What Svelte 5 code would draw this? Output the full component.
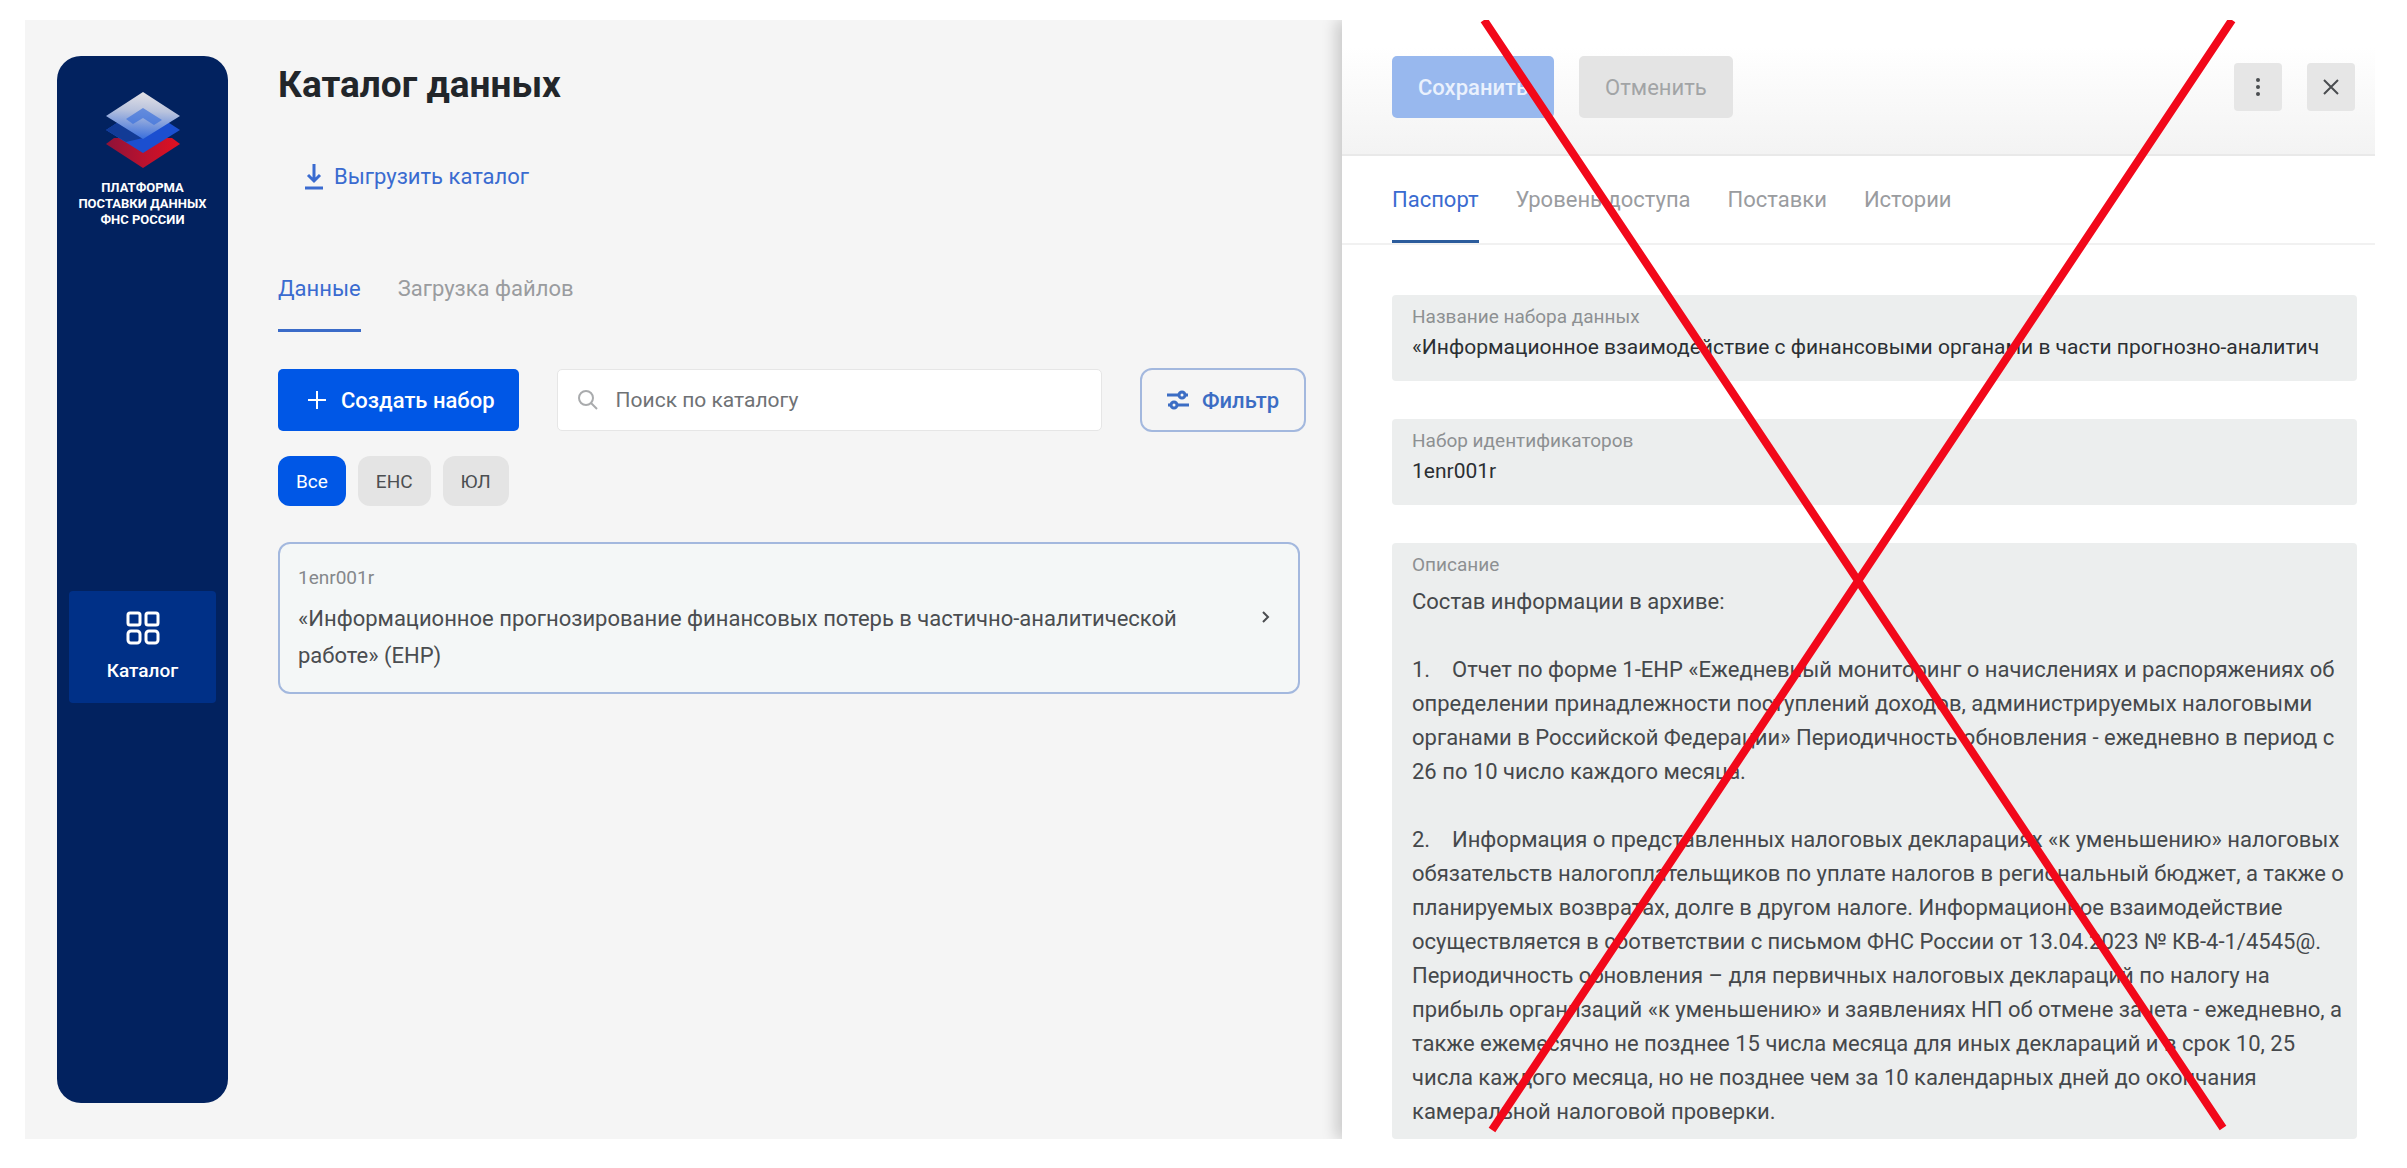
<script lang="ts">
  let mainTab = $state("Данные");
  let panelTab = $state("Паспорт");
  let chip = $state("Все");
  let query = $state("");

  const mainTabs = ["Данные", "Загрузка файлов"];
  const panelTabs = ["Паспорт", "Уровень доступа", "Поставки", "Истории"];
  const chips = ["Все", "ЕНС", "ЮЛ"];

  let name = $state(
    "«Информационное взаимодействие с финансовыми органами в части прогнозно-аналитич",
  );
  let ids = $state("1enr001r");
  let description = $state(
    [
      "Состав информации в архиве:",
      "",
      "1.\u00a0\u00a0\u00a0\u00a0Отчет по форме 1-ЕНР «Ежедневный мониторинг о начислениях и распоряжениях об",
      "определении принадлежности поступлений доходов, администрируемых налоговыми",
      "органами в Российской Федерации» Периодичность обновления - ежедневно в период с",
      "26 по 10 число каждого месяца.",
      "",
      "2.\u00a0\u00a0\u00a0\u00a0Информация о представленных налоговых декларациях «к уменьшению» налоговых",
      "обязательств налогоплательщиков по уплате налогов в региональный бюджет, а также о",
      "планируемых возвратах, долге в другом налоге. Информационное взаимодействие",
      "осуществляется в соответствии с письмом ФНС России от 13.04.2023 № КВ-4-1/4545@.",
      "Периодичность обновления – для первичных налоговых деклараций по налогу на",
      "прибыль организаций «к уменьшению» и заявлениях НП об отмене зачета - ежедневно, а",
      "также ежемесячно не позднее 15 числа месяца для иных деклараций и в срок 10, 25",
      "числа каждого месяца, но не позднее чем за 10 календарных дней до окончания",
      "камеральной налоговой проверки.",
    ].join("\n"),
  );
</script>

<div class="app">
  <div class="workspace">
    <aside class="sidebar">
      <div class="brand">
        <svg class="logo" viewBox="0 0 74 76" aria-hidden="true">
          <defs>
            <linearGradient id="top" x1="0.6" y1="0" x2="0.5" y2="1">
              <stop offset="0" stop-color="#e4e2e6" />
              <stop offset="0.4" stop-color="#b9c3dd" />
              <stop offset="1" stop-color="#3a6fdc" />
            </linearGradient>
            <linearGradient id="low" x1="0" y1="0" x2="1" y2="0">
              <stop offset="0" stop-color="#8e1238" />
              <stop offset="0.5" stop-color="#b8122f" />
              <stop offset="1" stop-color="#e01020" />
            </linearGradient>
          </defs>
          <path d="M0 52 L8 46 H66 L74 52 L37 76 Z" fill="url(#low)" />
          <path d="M0 38 L37 14 L74 38 L37 61 Z" fill="#1b4fd0" />
          <path d="M0 38 L14 29 L37 46 L20 50 Z" fill="#123b96" />
          <path d="M0 24 L37 0 L74 24 L37 47 Z" fill="url(#top)" />
          <path d="M20 27 L37 16 L56 28 L48 33 L37 26 L27 32 Z" fill="#3d72dc" opacity="0.7" />
        </svg>
        <p>ПЛАТФОРМА<br />ПОСТАВКИ ДАННЫХ<br />ФНС РОССИИ</p>
      </div>
      <nav>
        <a class="nav-item" href="#catalog">
          <svg viewBox="0 0 34 34" aria-hidden="true">
            <rect x="2" y="2" width="12" height="12" rx="2" />
            <rect x="20" y="2" width="12" height="12" rx="2" />
            <rect x="2" y="20" width="12" height="12" rx="3" />
            <rect x="20" y="20" width="12" height="12" rx="3" />
          </svg>
          Каталог
        </a>
      </nav>
    </aside>

    <main class="catalog">
      <h1>Каталог данных</h1>
      <button class="download">
        <svg viewBox="0 0 20 26" aria-hidden="true">
          <path d="M10 0 V17 M4 11 L10 17 L16 11 M1 24 H19" />
        </svg>
        Выгрузить каталог
      </button>

      <div class="tabs">
        {#each mainTabs as tab}
          <button class:active={mainTab === tab} onclick={() => (mainTab = tab)}>{tab}</button>
        {/each}
      </div>

      <div class="toolbar">
        <button class="create">
          <svg viewBox="0 0 18 18" aria-hidden="true">
            <path d="M9 0 V18 M0 9 H18" />
          </svg>
          Создать набор
        </button>
        <label class="search">
          <svg viewBox="0 0 20 20" aria-hidden="true">
            <circle cx="8" cy="8" r="7" />
            <path d="M13 13 L19 19" />
          </svg>
          <input type="text" placeholder="Поиск по каталогу" aria-label="Поиск по каталогу" bind:value={query} />
        </label>
        <button class="filter">
          <svg viewBox="0 0 22 20" aria-hidden="true">
            <path d="M0 5 H12 M18 5 H21 M1 15 H4 M10 15 H22" />
            <circle cx="15" cy="5" r="3" />
            <circle cx="7" cy="15" r="3" />
          </svg>
          Фильтр
        </button>
      </div>

      <div class="chips">
        {#each chips as item}
          <button class:active={chip === item} onclick={() => (chip = item)}>{item}</button>
        {/each}
      </div>

      <a class="card" href="#1enr001r">
        <span class="card-text">
          <small>1enr001r</small>
          <span>«Информационное прогнозирование финансовых потерь в частично-аналитической<br />работе» (ЕНР)</span>
        </span>
        <svg viewBox="0 0 8 12" aria-hidden="true">
          <path d="M1 1 L6 6 L1 11" />
        </svg>
      </a>
    </main>
  </div>

  <section class="panel">
    <header>
      <button class="save">Сохранить</button>
      <button class="cancel">Отменить</button>
      <button class="icon-btn menu" aria-label="Меню">
        <svg viewBox="0 0 20 20" aria-hidden="true">
          <circle cx="10" cy="3" r="2" />
          <circle cx="10" cy="10" r="2" />
          <circle cx="10" cy="17" r="2" />
        </svg>
      </button>
      <button class="icon-btn" aria-label="Закрыть">
        <svg viewBox="0 0 20 20" aria-hidden="true">
          <path d="M3 3 L17 17 M17 3 L3 17" />
        </svg>
      </button>
    </header>

    <div class="tabs panel-tabs">
      {#each panelTabs as tab}
        <button class:active={panelTab === tab} onclick={() => (panelTab = tab)}>{tab}</button>
      {/each}
    </div>

    <form>
      <div class="field">
        <label for="name">Название набора данных</label>
        <input id="name" type="text" bind:value={name} />
      </div>
      <div class="field">
        <label for="ids">Набор идентификаторов</label>
        <input id="ids" type="text" bind:value={ids} />
      </div>
      <div class="field long">
        <label for="description">Описание</label>
        <textarea id="description" rows="16" bind:value={description}></textarea>
      </div>
    </form>

    <svg class="cross" viewBox="0 0 1033 1118" preserveAspectRatio="none" aria-hidden="true">
      <path d="M142 0 L881 1107 M890 0 L150 1109" />
    </svg>
  </section>
</div>

<style>
  :global(body) {
    margin: 0;
    background: #fff;
    color: #2b2f33;
    font-family: Roboto, "Liberation Sans", sans-serif;
    font-size: 22px;
  }

  button,
  input,
  textarea {
    border: none;
    padding: 0;
    margin: 0;
    background: none;
    color: inherit;
    font: inherit;
    outline: none;
  }

  button {
    cursor: pointer;
  }

  svg {
    display: block;
    flex-shrink: 0;
    fill: none;
    stroke: currentColor;
    stroke-width: 2;
  }

  a {
    color: inherit;
    text-decoration: none;
  }

  .app {
    display: grid;
    grid-template-columns: 1317fr 1033fr;
    padding: 20px 32px 30px 25px;
  }

  .workspace {
    display: flex;
    gap: 50px;
    padding: 36px 42px 36px 32px;
    background: #f5f5f5;
  }

  .sidebar {
    display: flex;
    flex-direction: column;
    flex-shrink: 0;
    gap: 363px;
    width: 171px;
    box-sizing: border-box;
    padding: 36px 12px;
    border-radius: 24px;
    background: #02225f;
    color: #fff;
  }

  .brand {
    display: flex;
    flex-direction: column;
    align-items: center;
    gap: 12px;
  }

  .logo {
    width: 74px;
    height: 76px;
    stroke: none;
  }

  .brand p {
    margin: 0;
    font-size: 13px;
    font-weight: 700;
    line-height: 16px;
    text-align: center;
    white-space: nowrap;
  }

  .nav-item {
    display: flex;
    flex-direction: column;
    align-items: center;
    gap: 14px;
    height: 112px;
    box-sizing: border-box;
    padding-top: 20px;
    border-radius: 4px;
    background: #003087;
    font-size: 19px;
    font-weight: 500;
    line-height: 24px;
  }

  .nav-item svg {
    width: 34px;
    height: 34px;
    stroke-width: 3;
  }

  .catalog {
    flex: 1;
    min-width: 0;
  }

  h1 {
    margin: 0;
    color: #22262a;
    font-size: 37px;
    font-weight: 700;
    line-height: 58px;
  }

  .download {
    display: flex;
    align-items: center;
    gap: 10px;
    margin: 43px 0 0 26px;
    color: #3a6bd0;
    line-height: 40px;
  }

  .download svg {
    width: 20px;
    height: 26px;
    stroke-width: 3;
  }

  .tabs {
    display: flex;
    gap: 37px;
    line-height: 28px;
  }

  .tabs button {
    padding-bottom: 26px;
    border-bottom: 3px solid transparent;
    color: #9a9c9f;
  }

  .tabs button.active {
    border-color: #3a6bc8;
    color: #3a6bd0;
  }

  .catalog .tabs {
    margin-top: 78px;
  }

  .toolbar {
    display: flex;
    align-items: center;
    gap: 38px;
    margin-top: 36px;
    margin-right: -6px;
  }

  .create,
  .save {
    display: flex;
    align-items: center;
    gap: 15px;
    height: 62px;
    padding: 0 24px 0 30px;
    border-radius: 5px;
    background: #0057e6;
    color: #fff;
    font-weight: 500;
  }

  .create svg {
    width: 18px;
    height: 18px;
  }

  .search {
    display: flex;
    flex: 1;
    align-items: center;
    gap: 18px;
    height: 60px;
    padding: 0 20px;
    border: 1px solid #e6e6e6;
    border-radius: 5px;
    background: #fff;
  }

  .search svg {
    width: 20px;
    height: 20px;
    color: #a9abad;
  }

  .search input {
    flex: 1;
    min-width: 0;
    font-size: 21px;
  }

  .search input::placeholder {
    color: #6f7275;
    opacity: 1;
  }

  .filter {
    display: flex;
    align-items: center;
    gap: 13px;
    height: 64px;
    padding: 0 25px;
    border: 2px solid #a3b8de;
    border-radius: 12px;
    color: #3c6dc4;
    font-weight: 500;
  }

  .filter svg {
    width: 22px;
    height: 20px;
    stroke-width: 3;
  }

  .chips {
    display: flex;
    gap: 12px;
    margin-top: 24px;
  }

  .chips button {
    height: 50px;
    padding: 0 18px;
    border-radius: 12px;
    background: #e4e4e4;
    color: #4c4f52;
    font-size: 19px;
  }

  .chips button.active {
    background: #0057e6;
    color: #fff;
  }

  .card {
    display: flex;
    align-items: center;
    justify-content: space-between;
    margin-top: 36px;
    padding: 16px 28px 18px 18px;
    border: 2px solid #a3b8de;
    border-radius: 12px;
    background: #f4f7f7;
    color: #4a4d50;
    line-height: 37px;
  }

  .card-text {
    display: flex;
    flex-direction: column;
    gap: 4px;
  }

  .card small {
    color: #85888b;
    font-size: 19px;
    line-height: 36px;
  }

  .card svg {
    width: 8px;
    height: 12px;
  }

  .panel {
    position: relative;
    min-width: 0;
    background: #fff;
    box-shadow: -6px 0 14px rgba(0, 0, 0, 0.18);
    clip-path: inset(0 0 0 -20px);
  }

  .panel header {
    display: flex;
    align-items: center;
    gap: 25px;
    height: 136px;
    box-sizing: border-box;
    padding: 0 20px 0 50px;
    border-bottom: 2px solid #e9e9e9;
    background: linear-gradient(#fff 20%, #f3f3f3);
  }

  .save,
  .cancel {
    display: block;
    height: 62px;
    padding: 0 26px;
    border-radius: 5px;
  }

  .save {
    background: #98b8ee;
    color: #eaf1fd;
  }

  .cancel {
    background: #e4e4e4;
    color: #a2a4a6;
  }

  .icon-btn {
    display: grid;
    place-items: center;
    width: 48px;
    height: 48px;
    border-radius: 4px;
    background: #e6e6e6;
    color: #4a4d50;
  }

  .icon-btn svg {
    width: 20px;
    height: 20px;
  }

  .menu {
    margin-left: auto;
  }

  .menu circle {
    fill: currentColor;
    stroke: none;
  }

  .panel-tabs {
    padding: 30px 50px 0;
    border-bottom: 2px solid #f1f1f1;
  }

  .panel-tabs button.active {
    border-color: #2c5c9c;
  }

  form {
    display: flex;
    flex-direction: column;
    gap: 38px;
    padding: 50px 18px 0 50px;
  }

  .field {
    display: flex;
    flex-direction: column;
    padding: 10px 8px 16px 20px;
    border-radius: 4px;
    background: #eceeee;
  }

  .field.long {
    padding-bottom: 10px;
  }

  .field label {
    color: #8d9092;
    font-size: 19px;
    line-height: 24px;
  }

  .field input {
    height: 36px;
    color: #2b2f33;
    font-size: 21px;
  }

  .field textarea {
    display: block;
    height: 544px;
    margin-top: 8px;
    color: #45484b;
    line-height: 34px;
    overflow: hidden;
    resize: none;
    white-space: pre;
  }

  .cross {
    position: absolute;
    inset: 0;
    width: 100%;
    height: 100%;
    pointer-events: none;
    stroke: #f2081a;
    stroke-width: 8;
  }
</style>
